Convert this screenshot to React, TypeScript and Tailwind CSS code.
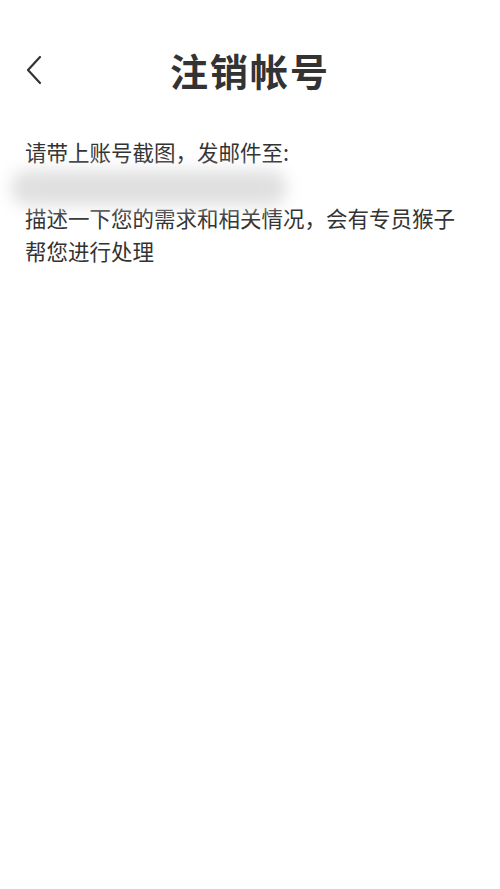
export default function App() {
  return (
    <div
      className="min-h-[889px] w-full bg-white pt-[45px] text-[#333333]"
      style={{ fontFamily: '"Noto Sans CJK SC", "Noto Sans", sans-serif' }}
    >
      {/* Header */}
      <header className="relative flex h-[50px] items-center justify-center">
        <button className="absolute left-[22px] top-[9px] flex h-[32px] w-[24px] items-center justify-center">
          <svg width="20" height="30" viewBox="0 0 20 30" fill="none">
            <path d="M16 2L4 15l12 13" stroke="#333" strokeWidth="2.2" strokeLinecap="round" strokeLinejoin="round" />
          </svg>
        </button>
        <h1 className="text-[38px] font-bold leading-[50px] tracking-[2px]">注销帐号</h1>
      </header>

      {/* Body */}
      <main className="px-[25px] pt-[40px] text-[21.5px] leading-[33px]">
        <p>请带上账号截图，发邮件至:</p>
        <div className="relative h-[33px]">
          <div className="absolute -left-[14px] top-[2px] h-[36px] w-[276px] rounded-full bg-[#e0e0e0] blur-[8px]" />
        </div>
        <p>描述一下您的需求和相关情况，会有专员猴子帮您进行处理</p>
      </main>
    </div>
  );
}
